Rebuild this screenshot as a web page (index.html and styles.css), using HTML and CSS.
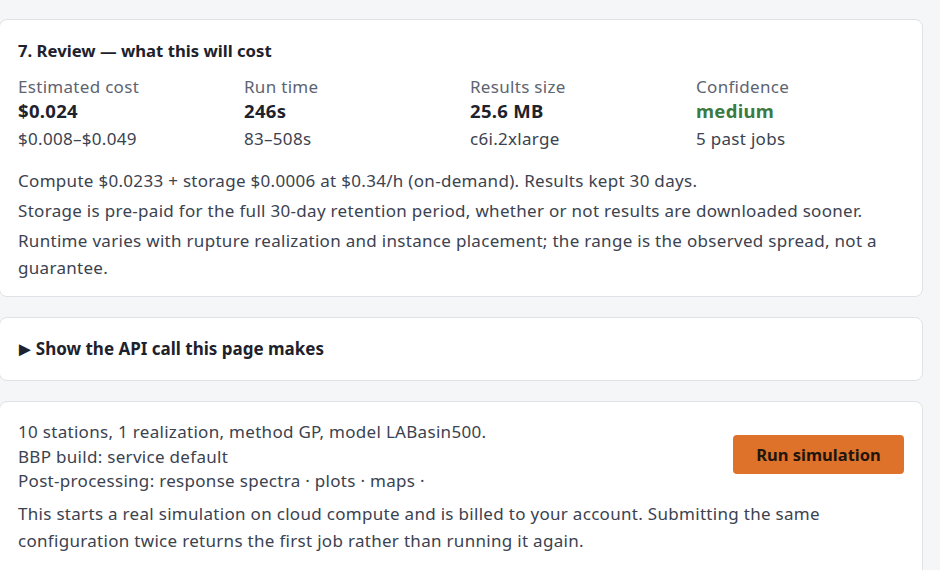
FILE: index.html
```html
<!DOCTYPE html>
<html>
	<head>
		<meta charset="utf-8">
		<title>Review</title>
		<link rel="stylesheet" href="styles.css">
	</head>
	<body>
		<div class="steps">
			<div class="card review">
				<h3>7. Review — what this will cost</h3>
				<div class="stats">
					<div class="stat">
						<p class="lbl">Estimated cost</p>
						<p class="val">$0.024</p>
						<p class="sub">$0.008–$0.049</p>
					</div>
					<div class="stat">
						<p class="lbl">Run time</p>
						<p class="val">246s</p>
						<p class="sub">83–508s</p>
					</div>
					<div class="stat">
						<p class="lbl">Results size</p>
						<p class="val">25.6 MB</p>
						<p class="sub">c6i.2xlarge</p>
					</div>
					<div class="stat">
						<p class="lbl">Confidence</p>
						<p class="val ok">medium</p>
						<p class="sub">5 past jobs</p>
					</div>
				</div>
				<p class="note">Compute $0.0233 + storage $0.0006 at $0.34/h (on-demand). Results kept 30 days.</p>
				<p class="note">Storage is pre-paid for the full 30-day retention period, whether or not results are downloaded sooner.</p>
				<p class="note">Runtime varies with rupture realization and instance placement; the range is the observed spread, not a guarantee.</p>
			</div>

			<div class="card api">
				<p class="toggle"><span class="arrow">►</span>Show the API call this page makes</p>
			</div>

			<div class="card submit">
				<div class="run">
					<div class="summary">
						<p>10 stations, 1 realization, method GP, model LABasin500.</p>
						<p>BBP build: service default</p>
						<p>Post-processing: response spectra · plots · maps ·</p>
					</div>
					<button class="runbtn">Run simulation</button>
				</div>
				<p class="warn">This starts a real simulation on cloud compute and is billed to your account. Submitting the same configuration twice returns the first job rather than running it again.</p>
			</div>
		</div>
	</body>
</html>
```

FILE: styles.css
```css
* {
	margin: 0;
	padding: 0;
	box-sizing: border-box;
}

html,body{
	height: 100%;
	background-color: #f5f6f8;
	font-family: "Noto Sans", "Open Sans", sans-serif;
	font-size: 17px;
	letter-spacing: 0.3px;
	color: #3b4250;
	overflow: hidden;
}

.steps{
	width: 924px;
	margin: 19px 0 0 -1px;
	display: flex;
	flex-direction: column;
	gap: 20px;
}

.card{
	background-color: #fff;
	border: 1px solid #dfe2e6;
	border-radius: 8px;
	padding: 19px 18px 15px;
}

.review h3{
	font-size: 16.7px;
	font-weight: 700;
	letter-spacing: 0;
	line-height: 24px;
	color: #1d222c;
	margin-bottom: 12px;
}

.stats{
	display: grid;
	grid-template-columns: repeat(4, 1fr);
	gap: 18px;
	margin-bottom: 12px;
}

.lbl{
	line-height: 24px;
	color: #5d6472;
}

.val{
	font-size: 18.5px;
	font-weight: 700;
	line-height: 24px;
	color: #1d222c;
}
.val.ok{
	color: #3b7a40;
}

.sub{
	line-height: 32px;
}

.note{
	line-height: 27px;
	margin-bottom: 3px;
}
.note:last-child{
	margin-bottom: 0;
}

.api{
	padding: 19px 18px;
}

.toggle{
	display: flex;
	align-items: center;
	font-weight: 700;
	letter-spacing: 0;
	line-height: 24px;
	color: #1d222c;
}
.toggle .arrow{
	font-size: 20px;
	margin: 0 1px 0 -3px;
}

.submit{
	padding-top: 18px;
	padding-bottom: 30px;
}

.run{
	display: flex;
	align-items: center;
	justify-content: space-between;
	margin-bottom: 6px;
}

.summary p{
	line-height: 24.5px;
}

.runbtn{
	width: 171px;
	height: 39px;
	margin-bottom: 4px;
	border: none;
	border-radius: 4px;
	background-color: #df722a;
	color: #22150c;
	font-family: inherit;
	font-size: 16.5px;
	font-weight: 700;
}

.warn{
	line-height: 27px;
}
```
